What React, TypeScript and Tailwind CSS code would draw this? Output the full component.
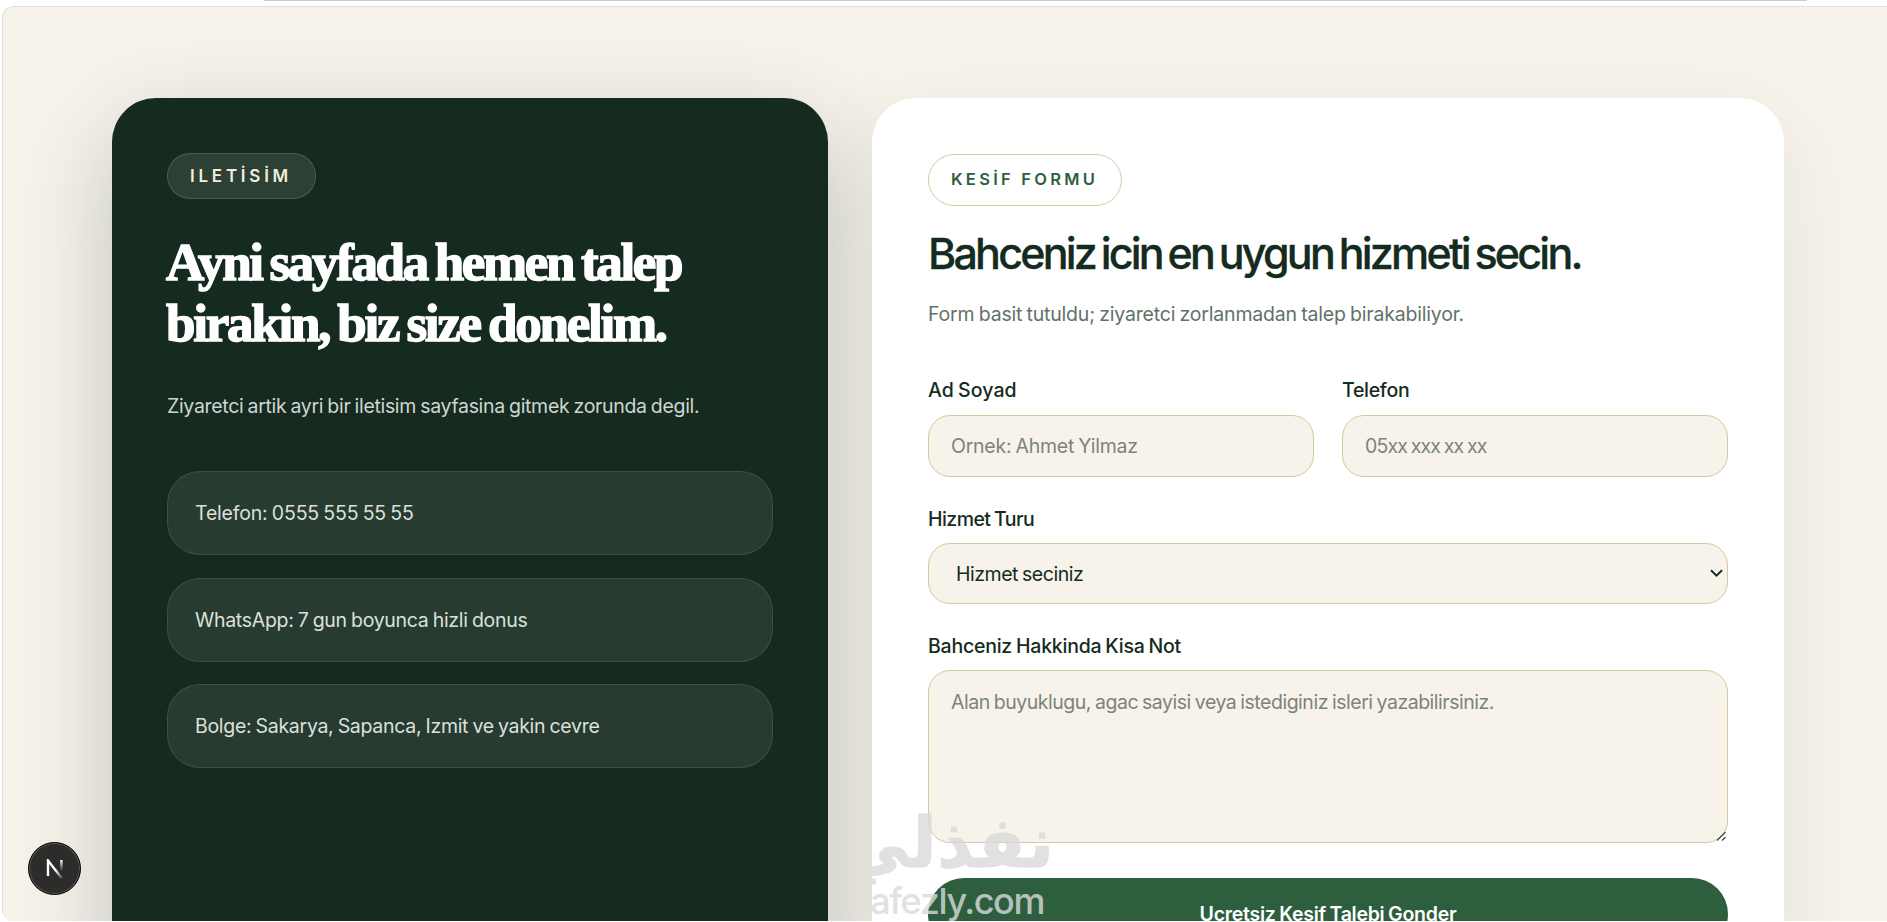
import React from 'react';
import clsx from 'clsx';

const fieldClass =
  'block w-full rounded-[22px] border border-[#d3c8a6] bg-[#f7f3eb] px-[22px] text-[19.5px] [word-spacing:-1px] text-[#142b20] placeholder:text-[#7d837a] outline-none';

const labelClass = 'block text-[19.5px] leading-[28px] font-medium [word-spacing:-1px] text-[#142b20]';

const contacts = [
  { text: 'Telefon: 0555 555 55 55', spacing: 'tracking-[-0.18px]' },
  { text: 'WhatsApp: 7 gun boyunca hizli donus', spacing: 'tracking-[-0.29px]' },
  { text: 'Bolge: Sakarya, Sapanca, Izmit ve yakin cevre', spacing: 'tracking-[-0.29px]' },
];

function ContactCard() {
  return (
    <section className="h-[900px] w-[716px] shrink-0 rounded-[44px] bg-[#152b20] p-[55px] text-white shadow-[0_33px_99px_rgba(21,43,32,0.24)]">
      <div className="flex h-[46px] w-[149px] items-center rounded-full border border-white/15 bg-white/10 pt-[2px] pl-[22px] text-[17px] font-semibold tracking-[3.76px] text-[#f3eedb]">
        ILETİSİM
      </div>

      <h2 className="mt-[33px] -ml-px font-['Liberation_Serif',serif] text-[53px] leading-[61px] font-bold whitespace-nowrap [word-spacing:-3px] [-webkit-text-stroke:1.5px_white]">
        <span className="block tracking-[-2.35px]">Ayni sayfada hemen talep</span>
        <span className="block tracking-[-2.23px]">birakin, biz size donelim.</span>
      </h2>

      <p className="mt-[34px] text-[19.5px] leading-[36px] tracking-[-0.32px] whitespace-nowrap [word-spacing:-1px] text-[#d0d5d2]">
        Ziyaretci artik ayri bir iletisim sayfasina gitmek zorunda degil.
      </p>

      <div className="mt-[47px] flex flex-col gap-[22.5px]">
        {contacts.map((item) => (
          <div
            key={item.text}
            className={clsx(
              'flex h-[84px] items-center rounded-[33px] border border-white/10 bg-white/8 px-[27px] pt-[2px] text-[19.5px] [word-spacing:-1px] text-[#dce0dd]',
              item.spacing
            )}
          >
            {item.text}
          </div>
        ))}
      </div>
    </section>
  );
}

function Watermark() {
  return (
    <div className="pointer-events-none absolute top-[700px] left-0 h-[124px] w-[182px] overflow-hidden text-[#dadada] opacity-80">
      <div
        dir="rtl"
        className="absolute top-[3px] right-0 font-['DejaVu_Sans',sans-serif] text-[70px] leading-[84px] font-bold whitespace-nowrap [-webkit-text-stroke:1px_#dadada]"
      >
        نفذلي
      </div>
      <div className="absolute top-[83px] right-[10px] text-[36px] leading-[40px] font-medium tracking-[-1.4px] whitespace-nowrap">
        nafezly.com
      </div>
    </div>
  );
}

function FormCard() {
  return (
    <section className="relative h-[900px] w-[912px] shrink-0 rounded-[44px] bg-white p-[56px] shadow-[0_26px_88px_rgba(21,43,32,0.08)]">
      <div className="flex h-[52px] w-[194px] items-center rounded-full border border-[#d3c8a6] pb-[2px] pl-[22px] text-[16.5px] font-semibold tracking-[3.27px] whitespace-nowrap text-[#2d5f3f]">
        KESİF FORMU
      </div>

      <h3 className="mt-[21px] text-[43px] leading-[52px] font-medium tracking-[-2.79px] whitespace-nowrap [word-spacing:-3px] text-[#142b20] [-webkit-text-stroke:0.3px_#142b20]">
        Bahceniz icin en uygun hizmeti secin.
      </h3>
      <p className="mt-[17px] text-[19.5px] leading-[36px] tracking-[-0.19px] whitespace-nowrap [word-spacing:-1px] text-[#5f7267]">
        Form basit tutuldu; ziyaretci zorlanmadan talep birakabiliyor.
      </p>

      <form className="mt-[44px]">
        <div className="grid grid-cols-2 gap-[28px]">
          <div>
            <label className={clsx(labelClass, 'tracking-[0.06px]')}>Ad Soyad</label>
            <input
              className={clsx(fieldClass, 'mt-[11px] h-[62px] tracking-[-0.25px]')}
              placeholder="Ornek: Ahmet Yilmaz"
            />
          </div>
          <div>
            <label className={clsx(labelClass, 'tracking-[-0.3px]')}>Telefon</label>
            <input
              className={clsx(fieldClass, 'mt-[11px] h-[62px] tracking-[-0.85px]')}
              placeholder="05xx xxx xx xx"
            />
          </div>
        </div>

        <label className={clsx(labelClass, 'mt-[28px] tracking-[-0.55px]')}>Hizmet Turu</label>
        <div className="relative mt-[10px]">
          <select className={clsx(fieldClass, 'h-[61px] appearance-none pt-[3px] pl-[27px] tracking-[-0.47px]')}>
            <option>Hizmet seciniz</option>
          </select>
          <svg className="absolute top-[26px] right-[5px]" width="13" height="9" viewBox="0 0 13 9" fill="none">
            <path d="M1.5 1.8 6.5 6.6l5-4.8" stroke="#142b20" strokeWidth="2" strokeLinecap="round" />
          </svg>
        </div>

        <label className={clsx(labelClass, 'mt-[28px] tracking-[-0.23px]')}>Bahceniz Hakkinda Kisa Not</label>
        <div className="relative mt-[10px]">
          <textarea
            className={clsx(fieldClass, 'h-[173px] resize-none py-[16px] leading-[30px] tracking-[-0.48px]')}
            placeholder="Alan buyuklugu, agac sayisi veya istediginiz isleri yazabilirsiniz."
          />
          <svg className="absolute right-[2px] bottom-[2px]" width="10" height="10" viewBox="0 0 10 10" fill="none">
            <path d="M1 9.5 9.5 1M6 9.5l3.5-3.3" stroke="#4b4b46" strokeWidth="1.4" />
          </svg>
        </div>

        <button
          type="button"
          className="mt-[35px] h-[72px] w-full rounded-full bg-[#2d5f3f] pt-px text-[19.5px] font-semibold tracking-[-0.26px] [word-spacing:-1px] text-white"
        >
          Ucretsiz Kesif Talebi Gonder
        </button>
      </form>

      <Watermark />
    </section>
  );
}

function DevBadge() {
  return (
    <div className="absolute bottom-[27px] left-[28px] flex size-[53px] items-center justify-center rounded-full border border-black bg-[#2d2c2b] shadow-[inset_0_0_0_1px_#5c5c5a]">
      <svg width="18" height="20" viewBox="0 0 18 20" fill="none">
        <defs>
          <linearGradient id="n-diagonal" x1="10" y1="11" x2="16" y2="19" gradientUnits="userSpaceOnUse">
            <stop stopColor="#fff" />
            <stop offset="1" stopColor="#fff" stopOpacity="0.15" />
          </linearGradient>
          <linearGradient id="n-stem" x1="0" y1="1" x2="0" y2="12" gradientUnits="userSpaceOnUse">
            <stop stopColor="#fff" />
            <stop offset="1" stopColor="#fff" stopOpacity="0" />
          </linearGradient>
        </defs>
        <path d="M2 17V1.5L15.8 19.2" stroke="url(#n-diagonal)" strokeWidth="2.4" />
        <path d="M15.4 1v11" stroke="url(#n-stem)" strokeWidth="2.4" />
      </svg>
    </div>
  );
}

export default function App() {
  return (
    <div className="relative h-[922px] w-full overflow-hidden bg-white pt-[6px] pl-[2px] font-['Inter',sans-serif]">
      <div className="absolute top-0 left-[264px] h-px w-[1543px] bg-[#cccacb]" />
      <div className="flex h-[915px] gap-[44px] overflow-hidden rounded-l-[12px] border-t border-l border-[#e0dfe3] bg-[#f7f3eb] pt-[91px] pl-[109px]">
        <ContactCard />
        <FormCard />
      </div>
      <DevBadge />
    </div>
  );
}
